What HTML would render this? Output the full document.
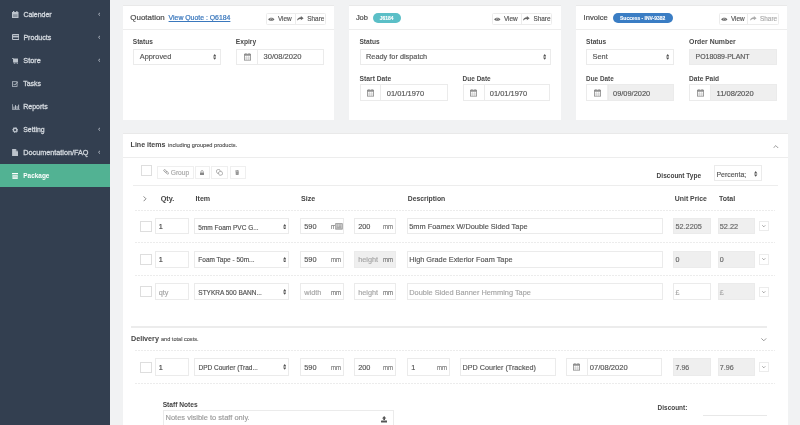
<!DOCTYPE html>
<html><head><meta charset="utf-8"><style>
html,body{margin:0;padding:0;width:800px;height:425px;overflow:hidden;background:#f1f2f3;font-family:"Liberation Sans",sans-serif;}
.t{position:absolute;white-space:nowrap;}
svg{display:block}
#w{position:absolute;left:0;top:0;width:800px;height:425px;overflow:hidden;background:#f1f2f3;filter:blur(0.3px);}
</style></head><body><div id="w">
<div style="position:absolute;left:0.00px;top:0.00px;width:110.00px;height:425.00px;background:#333f50"></div><div style="position:absolute;left:0.00px;top:164.00px;width:110.00px;height:23.00px;background:#52b293"></div><div class="t" style="left:23.39px;top:9.88px;line-height:10px;font-size:6.98px;font-weight:normal;color:#d3d8de;-webkit-text-stroke:0.15px #d3d8de;-webkit-text-stroke:0.3px #d3d8de">Calender</div><svg style="position:absolute;left:97.60px;top:12.00px" width="2.8" height="4.4" viewBox="0 0 2.8 4.4"><path d="M2.3 0.4L0.6 2.2L2.3 4" fill="none" stroke="#aeb5bf" stroke-width="1"/></svg><div class="t" style="left:23.39px;top:32.85px;line-height:10px;font-size:7.08px;font-weight:normal;color:#d3d8de;-webkit-text-stroke:0.15px #d3d8de;-webkit-text-stroke:0.3px #d3d8de">Products</div><svg style="position:absolute;left:97.60px;top:35.00px" width="2.8" height="4.4" viewBox="0 0 2.8 4.4"><path d="M2.3 0.4L0.6 2.2L2.3 4" fill="none" stroke="#aeb5bf" stroke-width="1"/></svg><div class="t" style="left:23.28px;top:55.77px;line-height:10px;font-size:7.30px;font-weight:normal;color:#d3d8de;-webkit-text-stroke:0.15px #d3d8de;-webkit-text-stroke:0.3px #d3d8de">Store</div><svg style="position:absolute;left:97.60px;top:58.00px" width="2.8" height="4.4" viewBox="0 0 2.8 4.4"><path d="M2.3 0.4L0.6 2.2L2.3 4" fill="none" stroke="#aeb5bf" stroke-width="1"/></svg><div class="t" style="left:23.29px;top:78.90px;line-height:10px;font-size:6.93px;font-weight:normal;color:#d3d8de;-webkit-text-stroke:0.15px #d3d8de;-webkit-text-stroke:0.3px #d3d8de">Tasks</div><div class="t" style="left:23.29px;top:101.88px;line-height:10px;font-size:6.97px;font-weight:normal;color:#d3d8de;-webkit-text-stroke:0.15px #d3d8de;-webkit-text-stroke:0.3px #d3d8de">Reports</div><div class="t" style="left:23.29px;top:124.92px;line-height:10px;font-size:6.88px;font-weight:normal;color:#d3d8de;-webkit-text-stroke:0.15px #d3d8de;-webkit-text-stroke:0.3px #d3d8de">Setting</div><svg style="position:absolute;left:97.60px;top:127.00px" width="2.8" height="4.4" viewBox="0 0 2.8 4.4"><path d="M2.3 0.4L0.6 2.2L2.3 4" fill="none" stroke="#aeb5bf" stroke-width="1"/></svg><div class="t" style="left:23.28px;top:147.79px;line-height:10px;font-size:7.24px;font-weight:normal;color:#d3d8de;-webkit-text-stroke:0.15px #d3d8de;-webkit-text-stroke:0.3px #d3d8de">Documentation/FAQ</div><svg style="position:absolute;left:97.60px;top:150.00px" width="2.8" height="4.4" viewBox="0 0 2.8 4.4"><path d="M2.3 0.4L0.6 2.2L2.3 4" fill="none" stroke="#aeb5bf" stroke-width="1"/></svg><div class="t" style="left:23.31px;top:171.06px;line-height:10px;font-size:6.45px;font-weight:bold;color:#ffffff;">Package</div><svg style="position:absolute;left:11.80px;top:10.90px" width="7" height="7.2" viewBox="0 0 14 14.4"><rect x="0" y="2" width="13" height="12.4" fill="#bcc3cc"/><rect x="2" y="0" width="2.5" height="4" fill="#bcc3cc"/><rect x="8.5" y="0" width="2.5" height="4" fill="#bcc3cc"/><rect x="2" y="6.5" width="9" height="5.5" fill="#333f50" opacity="0.35"/></svg><svg style="position:absolute;left:11.80px;top:34.10px" width="7.4" height="6.1" viewBox="0 0 15 12"><rect x="1.1" y="1.1" width="12.8" height="9.8" rx="0.8" fill="none" stroke="#bcc3cc" stroke-width="2.2"/><rect x="0" y="3.6" width="15" height="3.2" fill="#bcc3cc"/></svg><svg style="position:absolute;left:11.80px;top:57.70px" width="6.6" height="6.4" viewBox="0 0 13 12.6"><path d="M0 0H2.6L3.2 1.4H13L11.9 8.2H4.2L4.5 9.2H12V10.4H3.4L1.8 1.6H0Z" fill="#bcc3cc"/><rect x="2.2" y="1.4" width="10.6" height="6.8" fill="#bcc3cc"/><circle cx="4.6" cy="11.6" r="1.1" fill="#bcc3cc"/><circle cx="11" cy="11.6" r="1.1" fill="#bcc3cc"/></svg><svg style="position:absolute;left:12.00px;top:80.90px" width="6.4" height="5.8" viewBox="0 0 13 12"><rect x="0.9" y="1.5" width="9.5" height="9.6" fill="none" stroke="#bcc3cc" stroke-width="1.6"/><path d="M3 6L5.5 8.5L12 1.5" fill="none" stroke="#bcc3cc" stroke-width="2"/></svg><svg style="position:absolute;left:12.00px;top:103.80px" width="7.8" height="6.2" viewBox="0 0 16 12"><path d="M0.8 0V11.2H16" fill="none" stroke="#bcc3cc" stroke-width="1.6"/><rect x="3" y="5" width="2" height="5" fill="#bcc3cc"/><rect x="6.2" y="2" width="2" height="8" fill="#bcc3cc"/><rect x="9.4" y="4" width="2" height="6" fill="#bcc3cc"/><rect x="12.6" y="1" width="2" height="9" fill="#bcc3cc"/></svg><svg style="position:absolute;left:12.00px;top:126.90px" width="6.2" height="6.2" viewBox="0 0 12 12"><path d="M6 0L7.3 1.6L9.5 1.2L9.9 3.4L11.9 4.5L10.8 6.4L11.5 8.5L9.4 9.2L8.6 11.3L6.5 10.4L4.4 11.4L3.4 9.4L1.3 8.8L1.8 6.6L0.3 5L2 3.4L2.3 1.2L4.5 1.5Z" fill="#bcc3cc"/><circle cx="6" cy="6" r="2.2" fill="#333f50"/></svg><svg style="position:absolute;left:12.00px;top:149.10px" width="6.2" height="7" viewBox="0 0 12 14"><path d="M0 0H7.5L12 4.5V14H0Z" fill="#bcc3cc"/><path d="M7.5 0V4.5H12" fill="#333f50" opacity="0.5"/></svg><svg style="position:absolute;left:12.00px;top:172.90px" width="6.2" height="6.3" viewBox="0 0 12 12"><rect x="0" y="0" width="12" height="2.4" rx="0.6" fill="#fff"/><rect x="0.8" y="3.6" width="10.4" height="8.4" rx="1" fill="#fff" opacity="0.85"/><rect x="2.2" y="5.2" width="7.6" height="1.6" fill="#52b293" opacity="0.5"/><rect x="0.8" y="8" width="10.4" height="0.8" fill="#52b293" opacity="0.4"/></svg><div style="position:absolute;left:123.00px;top:5.00px;width:211.00px;height:115.00px;background:#fff;border-top:1px solid #e9e9e9;box-sizing:border-box"></div><div style="position:absolute;left:123.00px;top:29.00px;width:211.00px;height:1.00px;background:#ededed"></div><div class="t" style="left:130.36px;top:12.55px;line-height:10px;font-size:7.93px;font-weight:normal;color:#4d4d4d;-webkit-text-stroke:0.15px #4d4d4d;-webkit-text-stroke:0.2px #4d4d4d">Quotation</div><div class="t" style="left:168.59px;top:12.91px;line-height:10px;font-size:6.89px;font-weight:normal;color:#3b78bd;-webkit-text-stroke:0.15px #3b78bd;-webkit-text-stroke:0.22px #3b78bd;text-decoration:underline;text-decoration-thickness:0.6px;text-underline-offset:1px">View Quote : Q6184</div><div style="position:absolute;left:265.90px;top:13.30px;width:60.30px;height:11.40px;border:1px solid #ececec;box-sizing:border-box;border-radius:1.5px;background:#fff"></div><div style="position:absolute;left:294.60px;top:13.30px;width:1.00px;height:11.40px;background:#ececec"></div><svg style="position:absolute;left:268.20px;top:16.80px" width="6.6" height="4.6" viewBox="0 0 14 9.6"><path d="M0.3 4.8C3 0.2 11 0.2 13.7 4.8C11 9.4 3 9.4 0.3 4.8Z" fill="#666"/><circle cx="7" cy="4.8" r="2.6" fill="#fff" opacity="0.55"/><circle cx="7" cy="4.8" r="1.5" fill="#666"/></svg><div class="t" style="left:277.91px;top:14.08px;line-height:10px;font-size:6.40px;font-weight:normal;color:#555;-webkit-text-stroke:0.15px #555;">View</div><svg style="position:absolute;left:297.30px;top:16.40px" width="6.6" height="5" viewBox="0 0 13 9.5"><path d="M7.6 0L13 4.1L7.6 8.2V5.6C4.5 5.6 2 6.5 0 9C0.4 5 3 2.4 7.6 2.3Z" fill="#666"/></svg><div class="t" style="left:307.31px;top:14.08px;line-height:10px;font-size:6.40px;font-weight:normal;color:#555;-webkit-text-stroke:0.15px #555;">Share</div><div class="t" style="left:132.80px;top:37.02px;line-height:10px;font-size:6.57px;font-weight:bold;color:#4a4a4a;">Status</div><div style="position:absolute;left:133.20px;top:48.70px;width:87.80px;height:16.70px;background:#fff;border:1px solid #ebebeb;box-sizing:border-box"></div><div class="t" style="left:139.78px;top:51.75px;line-height:10px;font-size:7.37px;font-weight:normal;color:#555555;-webkit-text-stroke:0.15px #555555;">Approved</div><svg style="position:absolute;left:212.90px;top:54.30px" width="3.4" height="5.8" viewBox="0 0 3.4 5.8"><path d="M0 2.4L1.7 0L3.4 2.4Z M0 3.4L1.7 5.8L3.4 3.4Z" fill="#555"/></svg><div class="t" style="left:235.80px;top:36.99px;line-height:10px;font-size:6.67px;font-weight:bold;color:#4a4a4a;">Expiry</div><div style="position:absolute;left:236.20px;top:48.70px;width:87.80px;height:16.70px;background:#fff;border:1px solid #ebebeb;box-sizing:border-box"></div><div style="position:absolute;left:237.20px;top:49.70px;width:20.10px;height:14.70px;background:#fff"></div><div style="position:absolute;left:257.30px;top:48.70px;width:1.00px;height:16.70px;background:#ebebeb"></div><svg style="position:absolute;left:243.55px;top:53.15px" width="7" height="7.6" viewBox="0 0 14 15"><rect x="0.8" y="2.3" width="12.4" height="11.9" fill="none" stroke="#8a8a8a" stroke-width="1.6"/><rect x="0.8" y="2.3" width="12.4" height="3" fill="#8a8a8a"/><rect x="3" y="0" width="1.8" height="3.5" fill="#8a8a8a"/><rect x="9.2" y="0" width="1.8" height="3.5" fill="#8a8a8a"/><path d="M1 8.5H13M1 11.3H13M4.8 5.5V14M9.2 5.5V14" stroke="#8a8a8a" stroke-width="0.7" opacity="0.7"/></svg><div class="t" style="left:263.47px;top:51.67px;line-height:10px;font-size:7.58px;font-weight:normal;color:#555555;-webkit-text-stroke:0.15px #555555;">30/08/2020</div><div style="position:absolute;left:349.00px;top:5.00px;width:212.00px;height:115.00px;background:#fff;border-top:1px solid #e9e9e9;box-sizing:border-box"></div><div style="position:absolute;left:349.00px;top:29.00px;width:212.00px;height:1.00px;background:#ededed"></div><div class="t" style="left:355.88px;top:12.71px;line-height:10px;font-size:7.47px;font-weight:normal;color:#4d4d4d;-webkit-text-stroke:0.15px #4d4d4d;-webkit-text-stroke:0.2px #4d4d4d">Job</div><div style="position:absolute;left:372.60px;top:13.15px;width:28.50px;height:10.35px;background:#5bbfc7;border-radius:6px"></div><div class="t" style="left:379.75px;top:14.39px;line-height:10px;font-size:4.93px;font-weight:bold;color:#fff;-webkit-text-stroke:0.15px #fff">J6184</div><div style="position:absolute;left:491.90px;top:13.30px;width:60.50px;height:11.40px;border:1px solid #ececec;box-sizing:border-box;border-radius:1.5px;background:#fff"></div><div style="position:absolute;left:520.70px;top:13.30px;width:1.00px;height:11.40px;background:#ececec"></div><svg style="position:absolute;left:494.20px;top:16.80px" width="6.6" height="4.6" viewBox="0 0 14 9.6"><path d="M0.3 4.8C3 0.2 11 0.2 13.7 4.8C11 9.4 3 9.4 0.3 4.8Z" fill="#666"/><circle cx="7" cy="4.8" r="2.6" fill="#fff" opacity="0.55"/><circle cx="7" cy="4.8" r="1.5" fill="#666"/></svg><div class="t" style="left:503.91px;top:14.08px;line-height:10px;font-size:6.40px;font-weight:normal;color:#555;-webkit-text-stroke:0.15px #555;">View</div><svg style="position:absolute;left:523.40px;top:16.40px" width="6.6" height="5" viewBox="0 0 13 9.5"><path d="M7.6 0L13 4.1L7.6 8.2V5.6C4.5 5.6 2 6.5 0 9C0.4 5 3 2.4 7.6 2.3Z" fill="#666"/></svg><div class="t" style="left:533.41px;top:14.08px;line-height:10px;font-size:6.40px;font-weight:normal;color:#555;-webkit-text-stroke:0.15px #555;">Share</div><div class="t" style="left:359.40px;top:37.01px;line-height:10px;font-size:6.61px;font-weight:bold;color:#4a4a4a;">Status</div><div style="position:absolute;left:359.60px;top:48.70px;width:191.30px;height:16.70px;background:#fff;border:1px solid #ebebeb;box-sizing:border-box"></div><div class="t" style="left:366.08px;top:51.76px;line-height:10px;font-size:7.33px;font-weight:normal;color:#555555;-webkit-text-stroke:0.15px #555555;">Ready for dispatch</div><svg style="position:absolute;left:542.70px;top:54.30px" width="3.4" height="5.8" viewBox="0 0 3.4 5.8"><path d="M0 2.4L1.7 0L3.4 2.4Z M0 3.4L1.7 5.8L3.4 3.4Z" fill="#555"/></svg><div class="t" style="left:359.60px;top:73.97px;line-height:10px;font-size:6.73px;font-weight:bold;color:#4a4a4a;">Start Date</div><div style="position:absolute;left:359.60px;top:84.40px;width:88.00px;height:17.00px;background:#fff;border:1px solid #ebebeb;box-sizing:border-box"></div><div style="position:absolute;left:360.60px;top:85.40px;width:19.80px;height:15.00px;background:#fff"></div><div style="position:absolute;left:380.40px;top:84.40px;width:1.00px;height:17.00px;background:#ebebeb"></div><svg style="position:absolute;left:366.80px;top:89.00px" width="7" height="7.6" viewBox="0 0 14 15"><rect x="0.8" y="2.3" width="12.4" height="11.9" fill="none" stroke="#8a8a8a" stroke-width="1.6"/><rect x="0.8" y="2.3" width="12.4" height="3" fill="#8a8a8a"/><rect x="3" y="0" width="1.8" height="3.5" fill="#8a8a8a"/><rect x="9.2" y="0" width="1.8" height="3.5" fill="#8a8a8a"/><path d="M1 8.5H13M1 11.3H13M4.8 5.5V14M9.2 5.5V14" stroke="#8a8a8a" stroke-width="0.7" opacity="0.7"/></svg><div class="t" style="left:386.78px;top:88.71px;line-height:10px;font-size:7.48px;font-weight:normal;color:#555555;-webkit-text-stroke:0.15px #555555;">01/01/1970</div><div class="t" style="left:462.61px;top:74.05px;line-height:10px;font-size:6.48px;font-weight:bold;color:#4a4a4a;">Due Date</div><div style="position:absolute;left:462.80px;top:84.40px;width:87.60px;height:17.00px;background:#fff;border:1px solid #ebebeb;box-sizing:border-box"></div><div style="position:absolute;left:463.80px;top:85.40px;width:19.80px;height:15.00px;background:#fff"></div><div style="position:absolute;left:483.60px;top:84.40px;width:1.00px;height:17.00px;background:#ebebeb"></div><svg style="position:absolute;left:470.00px;top:89.00px" width="7" height="7.6" viewBox="0 0 14 15"><rect x="0.8" y="2.3" width="12.4" height="11.9" fill="none" stroke="#8a8a8a" stroke-width="1.6"/><rect x="0.8" y="2.3" width="12.4" height="3" fill="#8a8a8a"/><rect x="3" y="0" width="1.8" height="3.5" fill="#8a8a8a"/><rect x="9.2" y="0" width="1.8" height="3.5" fill="#8a8a8a"/><path d="M1 8.5H13M1 11.3H13M4.8 5.5V14M9.2 5.5V14" stroke="#8a8a8a" stroke-width="0.7" opacity="0.7"/></svg><div class="t" style="left:489.78px;top:88.71px;line-height:10px;font-size:7.48px;font-weight:normal;color:#555555;-webkit-text-stroke:0.15px #555555;">01/01/1970</div><div style="position:absolute;left:576.00px;top:5.00px;width:211.00px;height:115.00px;background:#fff;border-top:1px solid #e9e9e9;box-sizing:border-box"></div><div style="position:absolute;left:576.00px;top:29.00px;width:211.00px;height:1.00px;background:#ededed"></div><div class="t" style="left:583.57px;top:12.66px;line-height:10px;font-size:7.62px;font-weight:normal;color:#4d4d4d;-webkit-text-stroke:0.15px #4d4d4d;-webkit-text-stroke:0.2px #4d4d4d">Invoice</div><div style="position:absolute;left:612.90px;top:13.10px;width:60.20px;height:10.30px;background:#3a7dc4;border-radius:6px"></div><div class="t" style="left:620.05px;top:14.38px;line-height:10px;font-size:4.97px;font-weight:bold;color:#fff;-webkit-text-stroke:0.1px #fff">Success - INV-9382</div><div style="position:absolute;left:718.90px;top:13.30px;width:60.50px;height:11.40px;border:1px solid #ececec;box-sizing:border-box;border-radius:1.5px;background:#fff"></div><div style="position:absolute;left:747.35px;top:13.30px;width:1.00px;height:11.40px;background:#ececec"></div><svg style="position:absolute;left:721.20px;top:16.80px" width="6.6" height="4.6" viewBox="0 0 14 9.6"><path d="M0.3 4.8C3 0.2 11 0.2 13.7 4.8C11 9.4 3 9.4 0.3 4.8Z" fill="#666"/><circle cx="7" cy="4.8" r="2.6" fill="#fff" opacity="0.55"/><circle cx="7" cy="4.8" r="1.5" fill="#666"/></svg><div class="t" style="left:730.91px;top:14.08px;line-height:10px;font-size:6.40px;font-weight:normal;color:#555;-webkit-text-stroke:0.15px #555;">View</div><svg style="position:absolute;left:750.05px;top:16.40px" width="6.6" height="5" viewBox="0 0 13 9.5"><path d="M7.6 0L13 4.1L7.6 8.2V5.6C4.5 5.6 2 6.5 0 9C0.4 5 3 2.4 7.6 2.3Z" fill="#aaa"/></svg><div class="t" style="left:760.06px;top:14.08px;line-height:10px;font-size:6.40px;font-weight:normal;color:#aaa;-webkit-text-stroke:0.15px #aaa;">Share</div><div class="t" style="left:586.10px;top:37.02px;line-height:10px;font-size:6.57px;font-weight:bold;color:#4a4a4a;">Status</div><div style="position:absolute;left:586.30px;top:48.70px;width:87.50px;height:16.70px;background:#fff;border:1px solid #ebebeb;box-sizing:border-box"></div><div class="t" style="left:592.58px;top:51.75px;line-height:10px;font-size:7.36px;font-weight:normal;color:#555555;-webkit-text-stroke:0.15px #555555;">Sent</div><svg style="position:absolute;left:665.90px;top:54.30px" width="3.4" height="5.8" viewBox="0 0 3.4 5.8"><path d="M0 2.4L1.7 0L3.4 2.4Z M0 3.4L1.7 5.8L3.4 3.4Z" fill="#555"/></svg><div class="t" style="left:689.09px;top:36.92px;line-height:10px;font-size:6.88px;font-weight:bold;color:#4a4a4a;">Order Number</div><div style="position:absolute;left:689.30px;top:48.70px;width:87.70px;height:16.70px;background:#efefef;border:1px solid #ebebeb;box-sizing:border-box"></div><div class="t" style="left:695.59px;top:51.89px;line-height:10px;font-size:6.95px;font-weight:normal;color:#555555;-webkit-text-stroke:0.15px #555555;">PO18089-PLANT</div><div class="t" style="left:586.11px;top:74.10px;line-height:10px;font-size:6.36px;font-weight:bold;color:#4a4a4a;">Due Date</div><div style="position:absolute;left:586.30px;top:84.40px;width:87.50px;height:17.00px;background:#efefef;border:1px solid #ebebeb;box-sizing:border-box"></div><div style="position:absolute;left:587.30px;top:85.40px;width:20.20px;height:15.00px;background:#fff"></div><div style="position:absolute;left:607.50px;top:84.40px;width:1.00px;height:17.00px;background:#ebebeb"></div><svg style="position:absolute;left:593.70px;top:89.00px" width="7" height="7.6" viewBox="0 0 14 15"><rect x="0.8" y="2.3" width="12.4" height="11.9" fill="none" stroke="#8a8a8a" stroke-width="1.6"/><rect x="0.8" y="2.3" width="12.4" height="3" fill="#8a8a8a"/><rect x="3" y="0" width="1.8" height="3.5" fill="#8a8a8a"/><rect x="9.2" y="0" width="1.8" height="3.5" fill="#8a8a8a"/><path d="M1 8.5H13M1 11.3H13M4.8 5.5V14M9.2 5.5V14" stroke="#8a8a8a" stroke-width="0.7" opacity="0.7"/></svg><div class="t" style="left:613.08px;top:88.73px;line-height:10px;font-size:7.42px;font-weight:normal;color:#555555;-webkit-text-stroke:0.15px #555555;">09/09/2020</div><div class="t" style="left:689.10px;top:74.01px;line-height:10px;font-size:6.60px;font-weight:bold;color:#4a4a4a;">Date Paid</div><div style="position:absolute;left:689.30px;top:84.40px;width:87.70px;height:17.00px;background:#efefef;border:1px solid #ebebeb;box-sizing:border-box"></div><div style="position:absolute;left:690.30px;top:85.40px;width:19.90px;height:15.00px;background:#fff"></div><div style="position:absolute;left:710.20px;top:84.40px;width:1.00px;height:17.00px;background:#ebebeb"></div><svg style="position:absolute;left:696.55px;top:89.00px" width="7" height="7.6" viewBox="0 0 14 15"><rect x="0.8" y="2.3" width="12.4" height="11.9" fill="none" stroke="#8a8a8a" stroke-width="1.6"/><rect x="0.8" y="2.3" width="12.4" height="3" fill="#8a8a8a"/><rect x="3" y="0" width="1.8" height="3.5" fill="#8a8a8a"/><rect x="9.2" y="0" width="1.8" height="3.5" fill="#8a8a8a"/><path d="M1 8.5H13M1 11.3H13M4.8 5.5V14M9.2 5.5V14" stroke="#8a8a8a" stroke-width="0.7" opacity="0.7"/></svg><div class="t" style="left:716.57px;top:88.69px;line-height:10px;font-size:7.53px;font-weight:normal;color:#555555;-webkit-text-stroke:0.15px #555555;">11/08/2020</div><div style="position:absolute;left:123.00px;top:133.00px;width:664.50px;height:292.00px;background:#fff;border-top:1px solid #e9e9e9;box-sizing:border-box"></div><div style="position:absolute;left:123.00px;top:157.00px;width:664.50px;height:1.00px;background:#ededed"></div><div class="t" style="left:130.59px;top:139.85px;line-height:10px;font-size:7.06px;font-weight:bold;color:#444;">Line items</div><div class="t" style="left:167.52px;top:140.18px;line-height:10px;font-size:6.13px;font-weight:normal;color:#555;-webkit-text-stroke:0.15px #555;;transform:scaleX(0.92);transform-origin:0 0">including grouped products.</div><svg style="position:absolute;left:773.20px;top:144.80px" width="5.6" height="3.4" viewBox="0 0 5.6 3.4"><path d="M0.4 3L2.8 0.6L5.2 3" fill="none" stroke="#999" stroke-width="1"/></svg><div style="position:absolute;left:141.10px;top:165.20px;width:11.20px;height:11.20px;background:#fff;border:1px solid #dedede;box-sizing:border-box"></div><div style="position:absolute;left:157.30px;top:165.60px;width:37.00px;height:13.70px;background:#fff;border:1px solid #efefef;box-sizing:border-box"></div><div style="position:absolute;left:194.70px;top:165.60px;width:15.40px;height:13.70px;background:#fff;border:1px solid #efefef;box-sizing:border-box"></div><div style="position:absolute;left:210.80px;top:165.60px;width:17.50px;height:13.70px;background:#fff;border:1px solid #efefef;box-sizing:border-box"></div><div style="position:absolute;left:229.70px;top:165.60px;width:15.90px;height:13.70px;background:#fff;border:1px solid #efefef;box-sizing:border-box"></div><svg style="position:absolute;left:162.70px;top:169.00px" width="6.4" height="5.8" viewBox="0 0 12 11"><g fill="none" stroke="#999" stroke-width="1.5"><rect x="0.9" y="2.2" width="6.2" height="3.2" rx="1.6" transform="rotate(40 4 3.8)"/><rect x="4.9" y="5.6" width="6.2" height="3.2" rx="1.6" transform="rotate(40 8 7.2)"/></g></svg><div class="t" style="left:170.70px;top:167.98px;line-height:10px;font-size:6.69px;font-weight:normal;color:#a8a8a8;-webkit-text-stroke:0.15px #a8a8a8;">Group</div><svg style="position:absolute;left:200.00px;top:169.60px" width="4.2" height="5.4" viewBox="0 0 7 9"><rect x="0" y="4" width="7" height="5" rx="0.5" fill="#888"/><path d="M1.6 4.3V2.8A1.9 1.9 0 0 1 5.4 2.8V4.3" fill="none" stroke="#888" stroke-width="1.2"/></svg><svg style="position:absolute;left:216.00px;top:169.00px" width="7.2" height="6.9" viewBox="0 0 12 11.5"><g fill="none" stroke="#999" stroke-width="1.2"><rect x="1" y="1" width="6" height="6" rx="1.5" transform="rotate(-20 4 4)"/><rect x="4.6" y="4.2" width="6" height="6" rx="1.5" fill="#fff" transform="rotate(-20 7.6 7.2)"/></g></svg><svg style="position:absolute;left:234.80px;top:169.90px" width="4.4" height="5.4" viewBox="0 0 7 9"><rect x="0" y="1" width="7" height="1.2" fill="#888"/><rect x="2.3" y="0" width="2.4" height="1.2" fill="#888"/><path d="M0.8 2.6H6.2L5.7 9H1.3Z" fill="#888"/><path d="M2.6 3.6V8M4.4 3.6V8" stroke="#fff" stroke-width="0.5" opacity="0.6"/></svg><div class="t" style="left:656.60px;top:171.03px;line-height:10px;font-size:6.54px;font-weight:bold;color:#444;">Discount Type</div><div style="position:absolute;left:714.20px;top:165.30px;width:47.50px;height:16.10px;background:#fff;border:1px solid #ebebeb;box-sizing:border-box"></div><div class="t" style="left:716.49px;top:169.89px;line-height:10px;font-size:6.94px;font-weight:normal;color:#555;-webkit-text-stroke:0.15px #555;">Percenta;</div><svg style="position:absolute;left:754.40px;top:170.80px" width="3.4" height="5.8" viewBox="0 0 3.4 5.8"><path d="M0 2.4L1.7 0L3.4 2.4Z M0 3.4L1.7 5.8L3.4 3.4Z" fill="#555"/></svg><div style="position:absolute;left:133.00px;top:185.00px;width:644.50px;height:1.00px;background:#ededed"></div><svg style="position:absolute;left:143.30px;top:196.00px" width="3.6" height="5.6" viewBox="0 0 3.6 5.6"><path d="M0.6 0.4L3 2.8L0.6 5.2" fill="none" stroke="#888" stroke-width="1"/></svg><div class="t" style="left:160.68px;top:193.77px;line-height:10px;font-size:7.29px;font-weight:bold;color:#444;">Qty.</div><div class="t" style="left:195.59px;top:193.84px;line-height:10px;font-size:7.10px;font-weight:bold;color:#444;">Item</div><div class="t" style="left:301.09px;top:193.84px;line-height:10px;font-size:7.10px;font-weight:bold;color:#444;">Size</div><div class="t" style="left:407.80px;top:193.94px;line-height:10px;font-size:6.80px;font-weight:bold;color:#444;">Description</div><div class="t" style="left:674.79px;top:193.91px;line-height:10px;font-size:6.90px;font-weight:bold;color:#444;">Unit Price</div><div class="t" style="left:718.99px;top:193.87px;line-height:10px;font-size:7.01px;font-weight:bold;color:#444;">Total</div><div style="position:absolute;left:135.00px;top:209.80px;width:640.00px;height:1.00px;background:repeating-linear-gradient(90deg,#ececec 0 2px,transparent 2px 3px)"></div><div style="position:absolute;left:135.00px;top:242.00px;width:640.00px;height:1.00px;background:repeating-linear-gradient(90deg,#ececec 0 2px,transparent 2px 3px)"></div><div style="position:absolute;left:135.00px;top:274.50px;width:640.00px;height:1.00px;background:repeating-linear-gradient(90deg,#ececec 0 2px,transparent 2px 3px)"></div><div style="position:absolute;left:140.30px;top:220.60px;width:11.40px;height:11.20px;background:#fff;border:1px solid #dedede;box-sizing:border-box"></div><div style="position:absolute;left:155.30px;top:217.90px;width:33.50px;height:16.60px;background:#fff;border:1px solid #ebebeb;box-sizing:border-box"></div><div class="t" style="left:158.78px;top:222.27px;line-height:10px;font-size:7.30px;font-weight:normal;color:#444;-webkit-text-stroke:0.15px #444;">1</div><div style="position:absolute;left:193.90px;top:217.90px;width:95.50px;height:16.60px;background:#fff;border:1px solid #ebebeb;box-sizing:border-box"></div><div class="t" style="left:198.31px;top:222.55px;line-height:10px;font-size:6.50px;font-weight:normal;color:#505050;-webkit-text-stroke:0.15px #505050;">5mm Foam PVC G...</div><svg style="position:absolute;left:282.50px;top:223.50px" width="3.4" height="5.8" viewBox="0 0 3.4 5.8"><path d="M0 2.4L1.7 0L3.4 2.4Z M0 3.4L1.7 5.8L3.4 3.4Z" fill="#555"/></svg><div style="position:absolute;left:300.30px;top:217.90px;width:43.30px;height:16.60px;background:#fff;border:1px solid #ebebeb;box-sizing:border-box"></div><div class="t" style="left:304.28px;top:222.25px;line-height:10px;font-size:7.35px;font-weight:normal;color:#555555;-webkit-text-stroke:0.15px #555555;">590</div><div class="t" style="left:330.59px;top:222.37px;line-height:10px;font-size:7.00px;font-weight:normal;color:#777;-webkit-text-stroke:0.15px #777;transform:scaleX(0.86);transform-origin:0 0">mm</div><div style="position:absolute;left:354.20px;top:217.90px;width:41.90px;height:16.60px;background:#fff;border:1px solid #ebebeb;box-sizing:border-box"></div><div class="t" style="left:358.18px;top:222.25px;line-height:10px;font-size:7.35px;font-weight:normal;color:#555555;-webkit-text-stroke:0.15px #555555;">200</div><div class="t" style="left:383.09px;top:222.37px;line-height:10px;font-size:7.00px;font-weight:normal;color:#777;-webkit-text-stroke:0.15px #777;transform:scaleX(0.86);transform-origin:0 0">mm</div><div style="position:absolute;left:407.30px;top:217.90px;width:256.00px;height:16.60px;background:#fff;border:1px solid #ebebeb;box-sizing:border-box"></div><div class="t" style="left:409.28px;top:222.24px;line-height:10px;font-size:7.38px;font-weight:normal;color:#555555;-webkit-text-stroke:0.15px #555555;">5mm Foamex W/Double Sided Tape</div><div style="position:absolute;left:673.20px;top:217.90px;width:37.50px;height:16.60px;background:#efefef;border:1px solid #ebebeb;box-sizing:border-box"></div><div class="t" style="left:675.48px;top:222.27px;line-height:10px;font-size:7.31px;font-weight:normal;color:#666;-webkit-text-stroke:0.15px #666;">52.2205</div><div style="position:absolute;left:717.70px;top:217.90px;width:37.20px;height:16.60px;background:#efefef;border:1px solid #ebebeb;box-sizing:border-box"></div><div class="t" style="left:719.78px;top:222.25px;line-height:10px;font-size:7.37px;font-weight:normal;color:#666;-webkit-text-stroke:0.15px #666;">52.22</div><div style="position:absolute;left:759.25px;top:220.90px;width:9.60px;height:10.60px;background:#fff;border:1px solid #ececec;box-sizing:border-box"></div><svg style="position:absolute;left:762.25px;top:225.20px" width="3.6" height="2.2" viewBox="0 0 3.6 2.2"><path d="M0.3 0.3L1.8 1.8L3.3 0.3" fill="none" stroke="#888" stroke-width="0.8"/></svg><div style="position:absolute;left:140.30px;top:253.80px;width:11.40px;height:11.20px;background:#fff;border:1px solid #dedede;box-sizing:border-box"></div><div style="position:absolute;left:155.30px;top:251.20px;width:33.50px;height:16.40px;background:#fff;border:1px solid #ebebeb;box-sizing:border-box"></div><div class="t" style="left:158.78px;top:254.77px;line-height:10px;font-size:7.30px;font-weight:normal;color:#444;-webkit-text-stroke:0.15px #444;">1</div><div style="position:absolute;left:193.90px;top:251.20px;width:95.50px;height:16.40px;background:#fff;border:1px solid #ebebeb;box-sizing:border-box"></div><div class="t" style="left:198.31px;top:255.05px;line-height:10px;font-size:6.50px;font-weight:normal;color:#505050;-webkit-text-stroke:0.15px #505050;">Foam Tape - 50m...</div><svg style="position:absolute;left:282.50px;top:256.70px" width="3.4" height="5.8" viewBox="0 0 3.4 5.8"><path d="M0 2.4L1.7 0L3.4 2.4Z M0 3.4L1.7 5.8L3.4 3.4Z" fill="#555"/></svg><div style="position:absolute;left:300.30px;top:251.20px;width:43.30px;height:16.40px;background:#fff;border:1px solid #ebebeb;box-sizing:border-box"></div><div class="t" style="left:304.28px;top:254.75px;line-height:10px;font-size:7.35px;font-weight:normal;color:#555555;-webkit-text-stroke:0.15px #555555;">590</div><div class="t" style="left:330.59px;top:254.87px;line-height:10px;font-size:7.00px;font-weight:normal;color:#777;-webkit-text-stroke:0.15px #777;transform:scaleX(0.86);transform-origin:0 0">mm</div><div style="position:absolute;left:354.20px;top:251.20px;width:41.90px;height:16.40px;background:#efefef;border:1px solid #ebebeb;box-sizing:border-box"></div><div class="t" style="left:358.18px;top:254.77px;line-height:10px;font-size:7.30px;font-weight:normal;color:#a5a5a5;-webkit-text-stroke:0.15px #a5a5a5;">height</div><div class="t" style="left:383.09px;top:254.87px;line-height:10px;font-size:7.00px;font-weight:normal;color:#777;-webkit-text-stroke:0.15px #777;transform:scaleX(0.86);transform-origin:0 0">mm</div><div style="position:absolute;left:407.30px;top:251.20px;width:256.00px;height:16.40px;background:#fff;border:1px solid #ebebeb;box-sizing:border-box"></div><div class="t" style="left:409.28px;top:254.76px;line-height:10px;font-size:7.34px;font-weight:normal;color:#555555;-webkit-text-stroke:0.15px #555555;">High Grade Exterior Foam Tape</div><div style="position:absolute;left:673.20px;top:251.20px;width:37.50px;height:16.40px;background:#efefef;border:1px solid #ebebeb;box-sizing:border-box"></div><div class="t" style="left:675.49px;top:254.84px;line-height:10px;font-size:7.10px;font-weight:normal;color:#666;-webkit-text-stroke:0.15px #666;">0</div><div style="position:absolute;left:717.70px;top:251.20px;width:37.20px;height:16.40px;background:#efefef;border:1px solid #ebebeb;box-sizing:border-box"></div><div class="t" style="left:719.79px;top:254.84px;line-height:10px;font-size:7.10px;font-weight:normal;color:#666;-webkit-text-stroke:0.15px #666;">0</div><div style="position:absolute;left:759.25px;top:254.10px;width:9.60px;height:10.60px;background:#fff;border:1px solid #ececec;box-sizing:border-box"></div><svg style="position:absolute;left:762.25px;top:258.40px" width="3.6" height="2.2" viewBox="0 0 3.6 2.2"><path d="M0.3 0.3L1.8 1.8L3.3 0.3" fill="none" stroke="#888" stroke-width="0.8"/></svg><div style="position:absolute;left:140.30px;top:286.25px;width:11.40px;height:11.20px;background:#fff;border:1px solid #dedede;box-sizing:border-box"></div><div style="position:absolute;left:155.30px;top:283.40px;width:33.50px;height:16.90px;background:#fff;border:1px solid #ebebeb;box-sizing:border-box"></div><div class="t" style="left:158.78px;top:287.77px;line-height:10px;font-size:7.30px;font-weight:normal;color:#a5a5a5;-webkit-text-stroke:0.15px #a5a5a5;">qty</div><div style="position:absolute;left:193.90px;top:283.40px;width:95.50px;height:16.90px;background:#fff;border:1px solid #ebebeb;box-sizing:border-box"></div><div class="t" style="left:198.31px;top:288.05px;line-height:10px;font-size:6.50px;font-weight:normal;color:#505050;-webkit-text-stroke:0.15px #505050;">STYKRA 500 BANN...</div><svg style="position:absolute;left:282.50px;top:289.15px" width="3.4" height="5.8" viewBox="0 0 3.4 5.8"><path d="M0 2.4L1.7 0L3.4 2.4Z M0 3.4L1.7 5.8L3.4 3.4Z" fill="#555"/></svg><div style="position:absolute;left:300.30px;top:283.40px;width:43.30px;height:16.90px;background:#fff;border:1px solid #ebebeb;box-sizing:border-box"></div><div class="t" style="left:304.28px;top:287.77px;line-height:10px;font-size:7.30px;font-weight:normal;color:#a5a5a5;-webkit-text-stroke:0.15px #a5a5a5;">width</div><div class="t" style="left:330.59px;top:287.87px;line-height:10px;font-size:7.00px;font-weight:normal;color:#777;-webkit-text-stroke:0.15px #777;transform:scaleX(0.86);transform-origin:0 0">mm</div><div style="position:absolute;left:354.20px;top:283.40px;width:41.90px;height:16.90px;background:#fff;border:1px solid #ebebeb;box-sizing:border-box"></div><div class="t" style="left:358.18px;top:287.77px;line-height:10px;font-size:7.30px;font-weight:normal;color:#a5a5a5;-webkit-text-stroke:0.15px #a5a5a5;">height</div><div class="t" style="left:383.09px;top:287.87px;line-height:10px;font-size:7.00px;font-weight:normal;color:#777;-webkit-text-stroke:0.15px #777;transform:scaleX(0.86);transform-origin:0 0">mm</div><div style="position:absolute;left:407.30px;top:283.40px;width:256.00px;height:16.90px;background:#fff;border:1px solid #ebebeb;box-sizing:border-box"></div><div class="t" style="left:409.28px;top:287.74px;line-height:10px;font-size:7.39px;font-weight:normal;color:#a5a5a5;-webkit-text-stroke:0.15px #a5a5a5;">Double Sided Banner Hemming Tape</div><div style="position:absolute;left:673.20px;top:283.40px;width:37.50px;height:16.90px;background:#fff;border:1px solid #ebebeb;box-sizing:border-box"></div><div class="t" style="left:675.49px;top:287.84px;line-height:10px;font-size:7.10px;font-weight:normal;color:#a5a5a5;-webkit-text-stroke:0.15px #a5a5a5;">£</div><div style="position:absolute;left:717.70px;top:283.40px;width:37.20px;height:16.90px;background:#efefef;border:1px solid #ebebeb;box-sizing:border-box"></div><div class="t" style="left:719.79px;top:287.84px;line-height:10px;font-size:7.10px;font-weight:normal;color:#a5a5a5;-webkit-text-stroke:0.15px #a5a5a5;">£</div><div style="position:absolute;left:759.25px;top:286.55px;width:9.60px;height:10.60px;background:#fff;border:1px solid #ececec;box-sizing:border-box"></div><svg style="position:absolute;left:762.25px;top:290.85px" width="3.6" height="2.2" viewBox="0 0 3.6 2.2"><path d="M0.3 0.3L1.8 1.8L3.3 0.3" fill="none" stroke="#888" stroke-width="0.8"/></svg><svg style="position:absolute;left:334.85px;top:223.10px" width="7.95" height="6.8" viewBox="0 0 8 6.8"><rect x="0" y="0" width="8" height="6.8" rx="1" fill="#a9a9a9"/><rect x="0.9" y="1.1" width="6.2" height="4.2" fill="#d6d6d6"/><path d="M1.5 2H3.2M4 2H6.5M1.5 3.4H2.8M3.6 3.4H6.5M1.5 4.6H6.5" stroke="#8a8a8a" stroke-width="0.6"/></svg><div style="position:absolute;left:131.20px;top:326.00px;width:636.30px;height:2.00px;background:#ececec"></div><div class="t" style="left:130.98px;top:333.81px;line-height:10px;font-size:7.18px;font-weight:bold;color:#444;">Delivery</div><div class="t" style="left:160.62px;top:334.20px;line-height:10px;font-size:6.07px;font-weight:normal;color:#555;-webkit-text-stroke:0.15px #555;;transform:scaleX(0.92);transform-origin:0 0">and total costs.</div><svg style="position:absolute;left:761.00px;top:338.30px" width="5.6" height="3.4" viewBox="0 0 5.6 3.4"><path d="M0.4 0.4L2.8 2.8L5.2 0.4" fill="none" stroke="#999" stroke-width="1"/></svg><div style="position:absolute;left:135.00px;top:350.00px;width:640.00px;height:1.00px;background:repeating-linear-gradient(90deg,#ececec 0 2px,transparent 2px 3px)"></div><div style="position:absolute;left:135.00px;top:383.20px;width:640.00px;height:1.00px;background:repeating-linear-gradient(90deg,#ececec 0 2px,transparent 2px 3px)"></div><div style="position:absolute;left:140.30px;top:361.50px;width:11.40px;height:11.20px;background:#fff;border:1px solid #dedede;box-sizing:border-box"></div><div style="position:absolute;left:155.30px;top:358.30px;width:33.50px;height:17.60px;background:#fff;border:1px solid #ebebeb;box-sizing:border-box"></div><div class="t" style="left:158.78px;top:362.77px;line-height:10px;font-size:7.30px;font-weight:normal;color:#444;-webkit-text-stroke:0.15px #444;">1</div><div style="position:absolute;left:193.90px;top:358.30px;width:95.50px;height:17.60px;background:#fff;border:1px solid #ebebeb;box-sizing:border-box"></div><div class="t" style="left:198.50px;top:363.05px;line-height:10px;font-size:6.50px;font-weight:normal;color:#505050;-webkit-text-stroke:0.15px #505050;">DPD Courier (Trad...</div><svg style="position:absolute;left:282.50px;top:364.40px" width="3.4" height="5.8" viewBox="0 0 3.4 5.8"><path d="M0 2.4L1.7 0L3.4 2.4Z M0 3.4L1.7 5.8L3.4 3.4Z" fill="#555"/></svg><div style="position:absolute;left:300.30px;top:358.30px;width:43.30px;height:17.60px;background:#fff;border:1px solid #ebebeb;box-sizing:border-box"></div><div class="t" style="left:304.28px;top:362.75px;line-height:10px;font-size:7.35px;font-weight:normal;color:#555555;-webkit-text-stroke:0.15px #555555;">590</div><div class="t" style="left:330.59px;top:362.87px;line-height:10px;font-size:7.00px;font-weight:normal;color:#777;-webkit-text-stroke:0.15px #777;transform:scaleX(0.86);transform-origin:0 0">mm</div><div style="position:absolute;left:354.20px;top:358.30px;width:41.90px;height:17.60px;background:#fff;border:1px solid #ebebeb;box-sizing:border-box"></div><div class="t" style="left:358.18px;top:362.75px;line-height:10px;font-size:7.35px;font-weight:normal;color:#555555;-webkit-text-stroke:0.15px #555555;">200</div><div class="t" style="left:383.09px;top:362.87px;line-height:10px;font-size:7.00px;font-weight:normal;color:#777;-webkit-text-stroke:0.15px #777;transform:scaleX(0.86);transform-origin:0 0">mm</div><div style="position:absolute;left:407.30px;top:358.30px;width:42.50px;height:17.60px;background:#fff;border:1px solid #ebebeb;box-sizing:border-box"></div><div class="t" style="left:411.28px;top:362.77px;line-height:10px;font-size:7.30px;font-weight:normal;color:#555555;-webkit-text-stroke:0.15px #555555;">1</div><div class="t" style="left:436.79px;top:362.87px;line-height:10px;font-size:7.00px;font-weight:normal;color:#777;-webkit-text-stroke:0.15px #777;transform:scaleX(0.86);transform-origin:0 0">mm</div><div style="position:absolute;left:460.30px;top:358.30px;width:96.20px;height:17.60px;background:#fff;border:1px solid #ebebeb;box-sizing:border-box"></div><div class="t" style="left:462.58px;top:362.80px;line-height:10px;font-size:7.21px;font-weight:normal;color:#555555;-webkit-text-stroke:0.15px #555555;">DPD Courier (Tracked)</div><div style="position:absolute;left:566.10px;top:358.30px;width:96.40px;height:17.60px;background:#fff;border:1px solid #ebebeb;box-sizing:border-box"></div><div style="position:absolute;left:567.10px;top:359.30px;width:20.10px;height:15.60px;background:#fff"></div><div style="position:absolute;left:587.20px;top:358.30px;width:1.00px;height:17.60px;background:#ebebeb"></div><svg style="position:absolute;left:573.45px;top:363.20px" width="7" height="7.6" viewBox="0 0 14 15"><rect x="0.8" y="2.3" width="12.4" height="11.9" fill="none" stroke="#8a8a8a" stroke-width="1.6"/><rect x="0.8" y="2.3" width="12.4" height="3" fill="#8a8a8a"/><rect x="3" y="0" width="1.8" height="3.5" fill="#8a8a8a"/><rect x="9.2" y="0" width="1.8" height="3.5" fill="#8a8a8a"/><path d="M1 8.5H13M1 11.3H13M4.8 5.5V14M9.2 5.5V14" stroke="#8a8a8a" stroke-width="0.7" opacity="0.7"/></svg><div class="t" style="left:589.77px;top:362.67px;line-height:10px;font-size:7.58px;font-weight:normal;color:#555555;-webkit-text-stroke:0.15px #555555;">07/08/2020</div><div style="position:absolute;left:673.20px;top:358.30px;width:37.50px;height:17.60px;background:#efefef;border:1px solid #ebebeb;box-sizing:border-box"></div><div class="t" style="left:675.49px;top:362.84px;line-height:10px;font-size:7.10px;font-weight:normal;color:#666;-webkit-text-stroke:0.15px #666;">7.96</div><div style="position:absolute;left:717.70px;top:358.30px;width:37.20px;height:17.60px;background:#efefef;border:1px solid #ebebeb;box-sizing:border-box"></div><div class="t" style="left:719.79px;top:362.84px;line-height:10px;font-size:7.10px;font-weight:normal;color:#666;-webkit-text-stroke:0.15px #666;">7.96</div><div style="position:absolute;left:759.25px;top:361.80px;width:9.60px;height:10.60px;background:#fff;border:1px solid #ececec;box-sizing:border-box"></div><svg style="position:absolute;left:762.25px;top:366.10px" width="3.6" height="2.2" viewBox="0 0 3.6 2.2"><path d="M0.3 0.3L1.8 1.8L3.3 0.3" fill="none" stroke="#888" stroke-width="0.8"/></svg><div class="t" style="left:162.70px;top:400.00px;line-height:10px;font-size:6.63px;font-weight:bold;color:#444;">Staff Notes</div><div style="position:absolute;left:162.90px;top:410.40px;width:230.90px;height:29.60px;background:#fff;border:1px solid #ebebeb;box-sizing:border-box"></div><div class="t" style="left:165.53px;top:412.71px;line-height:10px;font-size:7.49px;font-weight:normal;color:#9a9a9a;-webkit-text-stroke:0.15px #9a9a9a;">Notes visible to staff only.</div><svg style="position:absolute;left:380.60px;top:416.30px" width="6.3" height="6.6" viewBox="0 0 6.3 6.6"><path d="M3.15 0L5.3 2.4H4V4H2.3V2.4H1Z" fill="#555"/><rect x="0" y="4.4" width="6.3" height="2.2" rx="0.6" fill="#555"/></svg><div class="t" style="left:657.61px;top:403.07px;line-height:10px;font-size:6.44px;font-weight:bold;color:#444;">Discount:</div><div style="position:absolute;left:702.80px;top:414.80px;width:64.60px;height:1.00px;background:#e8e8e8"></div>
</div></body></html>
